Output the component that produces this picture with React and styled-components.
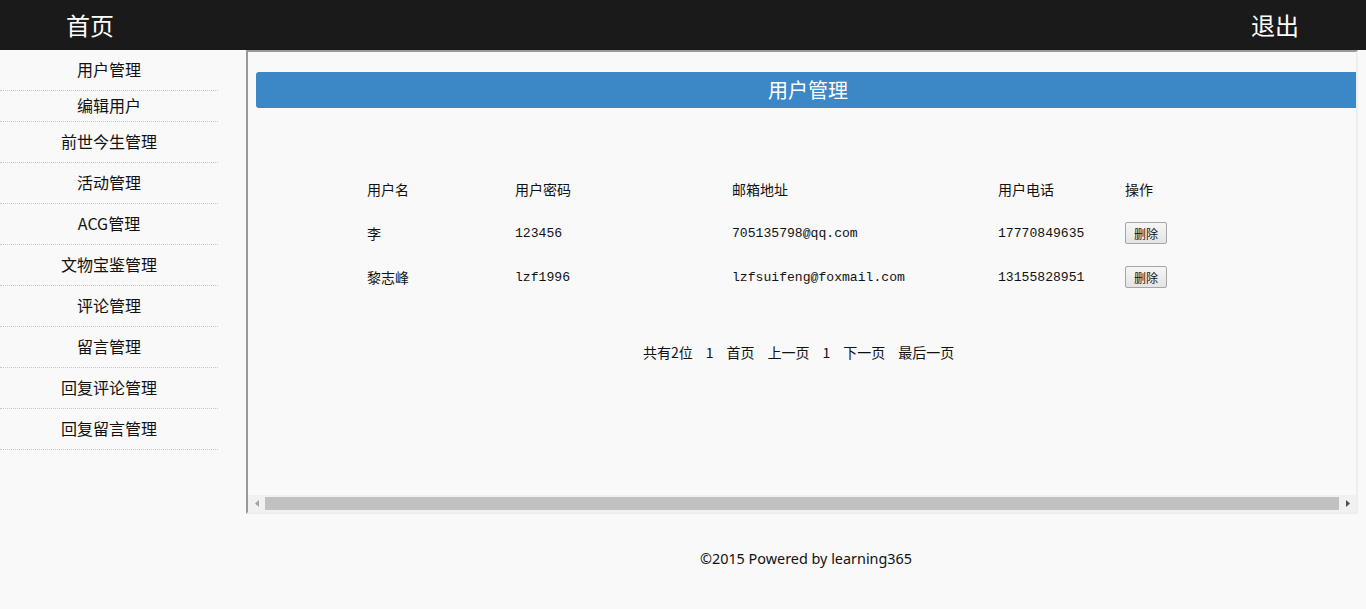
import React from "react";
import styled, { createGlobalStyle } from "styled-components";

const GlobalStyle = createGlobalStyle`
    body {
        margin: 0;
        background: #f9f9f9;
        font-family: "Noto Sans CJK SC", "Noto Sans", sans-serif;
        color: #111;
    }
`;

const TopBar = styled.div`
    height: 50px;
    background-color: #1a1a1a;
    display: flex;
    align-items: center;
    justify-content: space-between;
    padding: 0 67px 0 66px;
    color: #fff;
    font-size: 24px;
`;

const TopLink = styled.span`
    line-height: 50px;
`;

const Body = styled.div`
    display: flex;
`;

const SideBar = styled.div`
    width: 246px;
    flex-shrink: 0;
`;

const SideItem = styled.div`
    width: 218px;
    height: ${(p) => p.$h || 40}px;
    line-height: ${(p) => (p.$h || 40) - 2}px;
    text-align: center;
    font-size: 16px;
    border-bottom: 1px dotted #c8c8c8;
`;

const Main = styled.div`
    flex: 1;
    display: flex;
    flex-direction: column;
`;

const Frame = styled.div`
    width: 1108px;
    height: 460px;
    border-style: solid;
    border-width: 2px;
    border-color: #999 #eee #eee #999;
    display: flex;
    flex-direction: column;
    overflow: hidden;
`;

const FrameView = styled.div`
    flex: 1;
    overflow: hidden;
    padding: 20px 0 0 8px;
`;

const Inner = styled.div`
    width: 1200px;
`;

const Banner = styled.div`
    height: 36px;
    line-height: 36px;
    background-color: #3c87c6;
    border-radius: 3px 0 0 3px;
    color: #fff;
    font-size: 20px;
    text-align: center;
    padding-right: 96px;
`;

const Table = styled.div`
    margin: 59px 0 0 111px;
    display: grid;
    grid-template-columns: 148px 217px 266px 127px 120px;
`;

const Cell = styled.div`
    height: 44px;
    display: flex;
    align-items: center;
    font-family: ${(p) =>
        p.$mono ? '"Liberation Mono", "Noto Sans CJK SC", monospace' : '"Noto Sans CJK SC", sans-serif'};
    font-size: ${(p) => (p.$mono ? "13.1px" : "14px")};
`;

const DelButton = styled.button`
    width: 42px;
    height: 22px;
    padding: 0;
    font-size: 12px;
    font-family: "Noto Sans CJK SC", sans-serif;
    background: linear-gradient(#f6f6f6, #e4e4e4);
    border: 1px solid #a6a6a6;
    border-radius: 2px;
    color: #111;
`;

const Pager = styled.div`
    margin: 43px 0 0 387px;
    display: flex;
    gap: 13px;
    font-size: 14px;
    line-height: 20px;
`;

const ScrollBar = styled.div`
    height: 17px;
    background: #f1f1f1;
    display: flex;
    align-items: center;
`;

const Arrow = styled.div`
    width: 17px;
    height: 17px;
    display: flex;
    align-items: center;
    justify-content: center;
`;

const Thumb = styled.div`
    flex: 1;
    height: 13px;
    background: #c1c1c1;
`;

const Footer = styled.div`
    width: 1112px;
    text-align: center;
    font-size: 14.4px;
    font-family: "Noto Sans", "Noto Sans CJK SC", sans-serif;
    padding: 35px 0 0 4px;
`;

const menu = [
    ["用户管理", 40],
    ["编辑用户", 30],
    ["前世今生管理"],
    ["活动管理"],
    ["ACG管理"],
    ["文物宝鉴管理"],
    ["评论管理"],
    ["留言管理"],
    ["回复评论管理"],
    ["回复留言管理"],
];

const users = [
    { name: "李", pwd: "123456", mail: "705135798@qq.com", tel: "17770849635" },
    { name: "黎志峰", pwd: "lzf1996", mail: "lzfsuifeng@foxmail.com", tel: "13155828951" },
];

export default function App() {
    return (
        <>
            <GlobalStyle />
            <TopBar>
                <TopLink>首页</TopLink>
                <TopLink>退出</TopLink>
            </TopBar>
            <Body>
                <SideBar>
                    {menu.map(([label, h]) => (
                        <SideItem key={label} $h={h}>{label}</SideItem>
                    ))}
                </SideBar>
                <Main>
                    <Frame>
                        <FrameView>
                            <Inner>
                                <Banner>用户管理</Banner>
                                <Table>
                                    <Cell>用户名</Cell>
                                    <Cell>用户密码</Cell>
                                    <Cell>邮箱地址</Cell>
                                    <Cell>用户电话</Cell>
                                    <Cell>操作</Cell>
                                    {users.map((u) => (
                                        <React.Fragment key={u.tel}>
                                            <Cell>{u.name}</Cell>
                                            <Cell $mono>{u.pwd}</Cell>
                                            <Cell $mono>{u.mail}</Cell>
                                            <Cell $mono>{u.tel}</Cell>
                                            <Cell><DelButton>删除</DelButton></Cell>
                                        </React.Fragment>
                                    ))}
                                </Table>
                                <Pager>
                                    <span>共有2位</span>
                                    <span>1</span>
                                    <span>首页</span>
                                    <span>上一页</span>
                                    <span>1</span>
                                    <span>下一页</span>
                                    <span>最后一页</span>
                                </Pager>
                            </Inner>
                        </FrameView>
                        <ScrollBar>
                            <Arrow>
                                <svg width="4" height="7" viewBox="0 0 4 7"><path d="M4 0 L0 3.5 L4 7 Z" fill="#a3a3a3" /></svg>
                            </Arrow>
                            <Thumb />
                            <Arrow>
                                <svg width="4" height="7" viewBox="0 0 4 7"><path d="M0 0 L4 3.5 L0 7 Z" fill="#505050" /></svg>
                            </Arrow>
                        </ScrollBar>
                    </Frame>
                    <Footer>©2015 Powered by learning365</Footer>
                </Main>
            </Body>
        </>
    );
}
